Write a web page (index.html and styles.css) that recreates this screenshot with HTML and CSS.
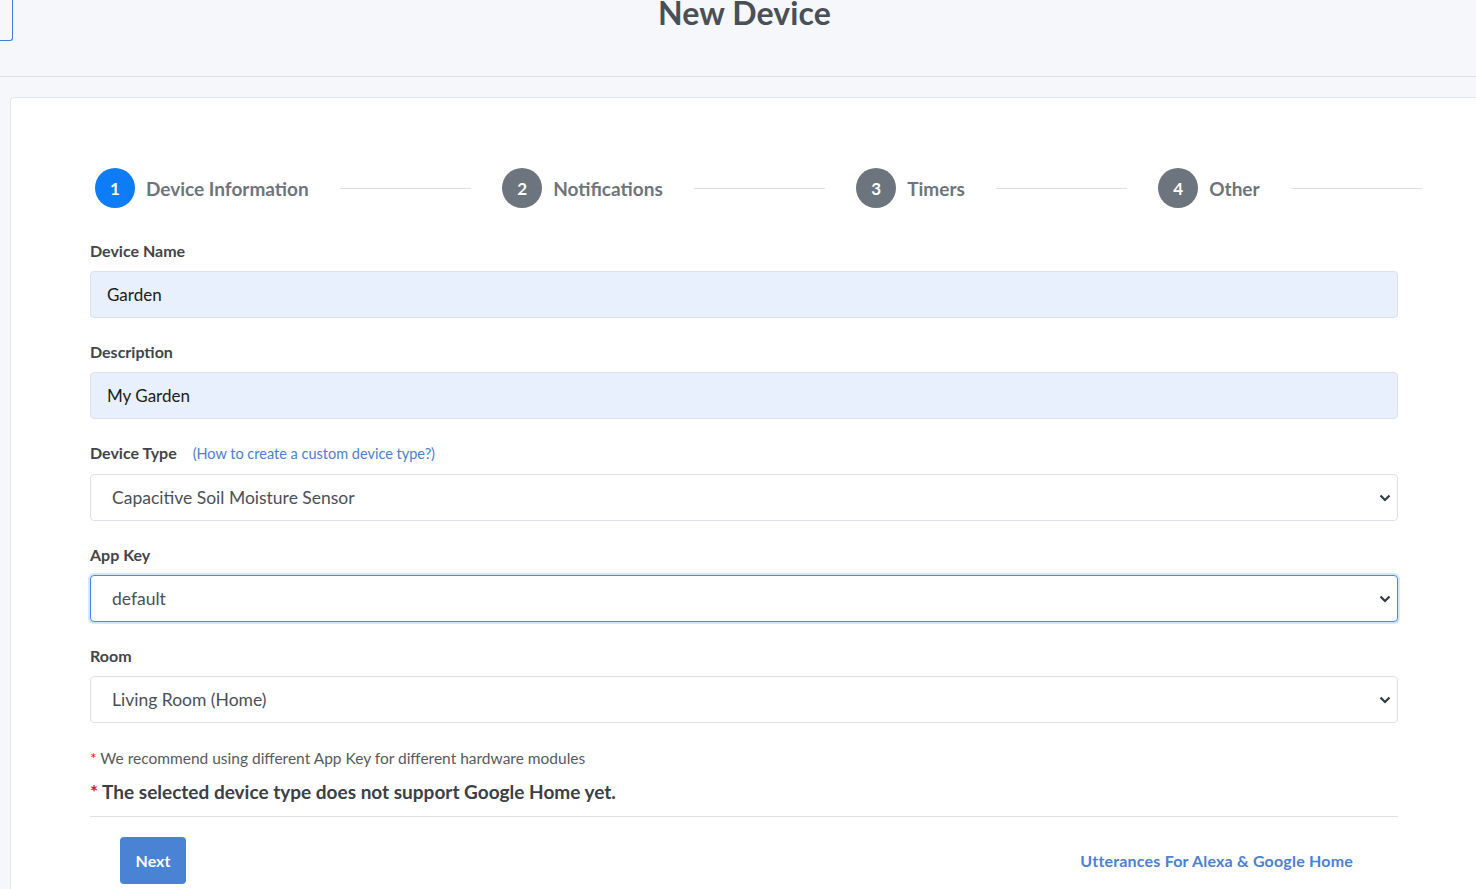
FILE: index.html
```html
<!DOCTYPE html>
<html lang="en">
<head>
<meta charset="utf-8">
<title>New Device</title>
<link rel="stylesheet" href="styles.css">
</head>
<body>
<header class="topbar">
  <div class="back-btn"></div>
  <h1 class="title">New Device</h1>
</header>
<main class="card">
  <div class="stepper">
    <div class="step active"><span class="circle">1</span><span class="step-label">Device Information</span></div>
    <div class="line"></div>
    <div class="step"><span class="circle">2</span><span class="step-label">Notifications</span></div>
    <div class="line"></div>
    <div class="step"><span class="circle">3</span><span class="step-label">Timers</span></div>
    <div class="line"></div>
    <div class="step"><span class="circle">4</span><span class="step-label">Other</span></div>
    <div class="line last"></div>
  </div>

  <form class="form">
    <div class="group">
      <label class="label">Device Name</label>
      <input class="field filled" type="text" value="Garden">
    </div>
    <div class="group">
      <label class="label">Description</label>
      <input class="field filled" type="text" value="My Garden">
    </div>
    <div class="group">
      <label class="label">Device Type <a class="help-link" href="#">(How to create a custom device type?)</a></label>
      <div class="select-wrap">
        <select class="field select"><option>Capacitive Soil Moisture Sensor</option></select>
        <svg class="chevron" viewBox="0 0 12 8" width="12" height="8"><path d="M1.5 1.5 L6 6 L10.5 1.5" fill="none" stroke="#343a40" stroke-width="2.2"/></svg>
      </div>
    </div>
    <div class="group">
      <label class="label">App Key</label>
      <div class="select-wrap">
        <select class="field select focused"><option>default</option></select>
        <svg class="chevron" viewBox="0 0 12 8" width="12" height="8"><path d="M1.5 1.5 L6 6 L10.5 1.5" fill="none" stroke="#343a40" stroke-width="2.2"/></svg>
      </div>
    </div>
    <div class="group">
      <label class="label">Room</label>
      <div class="select-wrap">
        <select class="field select"><option>Living Room (Home)</option></select>
        <svg class="chevron" viewBox="0 0 12 8" width="12" height="8"><path d="M1.5 1.5 L6 6 L10.5 1.5" fill="none" stroke="#343a40" stroke-width="2.2"/></svg>
      </div>
    </div>
    <p class="note"><span class="star">*</span> We recommend using different App Key for different hardware modules</p>
    <p class="warn"><span class="star">*</span> The selected device type does not support Google Home yet.</p>
    <hr class="divider">
    <div class="actions">
      <button class="btn-next" type="button">Next</button>
      <a class="utter-link" href="#">Utterances For Alexa &amp; Google Home</a>
    </div>
  </form>
</main>
</body>
</html>
```

FILE: styles.css
```css
* { box-sizing: border-box; }
html, body { margin: 0; padding: 0; }
body {
  background: #f6f7fb;
  font-family: "Source Sans Pro", Lato, "Liberation Sans", sans-serif;
  color: #495057;
  overflow: hidden;
  height: 889px;
}
.topbar {
  height: 77px;
  border-bottom: 1px solid #dce1ec;
  display: flex;
  justify-content: center;
  position: relative;
}
.back-btn {
  position: absolute;
  left: 0;
  top: 0;
  width: 13px;
  height: 41px;
  border: 1px solid #3d7fd8;
  border-left: none;
  border-top: none;
  border-bottom-right-radius: 3px;
}
.title {
  margin: -9px 0 0 13px;
  font-size: 32px;
  font-weight: 700;
  line-height: 44px;
  color: #4a5058;
  letter-spacing: 0.1px;
}
.card {
  margin: 20px 0 0 10px;
  background: #fff;
  border: 1px solid #e2e6ef;
  border-right: none;
  border-top-left-radius: 4px;
  padding: 70px 0 0 79px;
  height: 820px;
}
.stepper {
  display: flex;
  align-items: center;
  width: 1327px;
  margin-left: 5px;
  height: 40px;
}
.step { display: flex; align-items: center; gap: 11px; }
.circle {
  width: 40px; height: 40px; border-radius: 50%;
  background: #6c757d; color: #fff;
  display: flex; align-items: center; justify-content: center;
  font-weight: 700; font-size: 17px;
}
.step.active .circle { background: #0d7cf6; }
.step-label { font-weight: 700; font-size: 19px; color: #6c757d; }
.line { flex: 1; height: 1px; background: #dcdfe3; margin: 0 31px; }
.line.last { margin-right: 0; }
.form { width: 1308px; margin-top: 31px; }
.group { margin-bottom: 22px; }
.label {
  display: block;
  font-size: 16px;
  font-weight: 700;
  line-height: 24px;
  color: #3f454b;
  margin-bottom: 8px;
}
.help-link {
  font-weight: 400;
  font-size: 14.5px;
  color: #4a80d6;
  text-decoration: none;
  margin-left: 12px;
}
.field {
  display: block;
  width: 100%;
  height: 47px;
  border: 1px solid #dde2ea;
  border-radius: 4px;
  background: #fff;
  font-family: inherit;
  font-size: 17px;
  color: #495057;
  padding: 0 16px;
  outline: none;
}
.field.filled { background: #e8f0fe; color: #1a1d20; }
.select-wrap { position: relative; }
.select {
  appearance: none;
  -webkit-appearance: none;
  padding-left: 21px;
  font-size: 17.5px;
}
.select.focused {
  border-color: #3d8ef2;
  box-shadow: 0 0 0 2px #d6e6fb;
}
.chevron { position: absolute; right: 7px; top: 20px; pointer-events: none; }
.note {
  margin: 25px 0 0 0;
  font-size: 15.5px;
  line-height: 20px;
  color: #555b61;
}
.star { color: #e3140f; }
.warn {
  margin: 11px 0 0 0;
  font-size: 19px;
  font-weight: 700;
  line-height: 26px;
  color: #3b4046;
}
.divider { margin: 11px 0 0 0; border: none; border-top: 1px solid #dee2e6; }
.actions {
  display: flex;
  justify-content: space-between;
  align-items: center;
  margin-top: 20px;
  padding: 0 45px 0 30px;
}
.btn-next {
  width: 66px; height: 47px;
  border: none; border-radius: 4px;
  background: #4a82d4; color: #fff;
  font-family: inherit; font-weight: 700; font-size: 16px;
}
.utter-link {
  font-weight: 700;
  font-size: 16px;
  color: #4a80d6;
  text-decoration: none;
  letter-spacing: 0.2px;
}
```
